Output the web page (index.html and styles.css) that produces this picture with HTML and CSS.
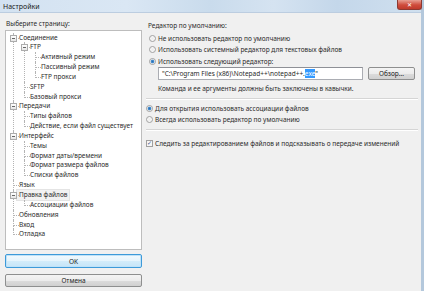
FILE: index.html
```html
<!DOCTYPE html>
<html>

<head>
  <meta charset='utf-8'>
  <title>Настройки</title>
  <meta name='viewport' content='width=device-width, initial-scale=1'>
  <link rel="stylesheet" href="styles.css">
</head>

<body>
  <div class="window">
    <div class="titlebar">
      <span class="title">Настройки</span>
      <span class="close">&#x2715;</span>
    </div>
    <div class="content">
      <div class="left">
        <div class="caption">Выберите страницу:</div>
        <div class="treebox">
          <ul class="tree">
            <li><span class="exp"></span><span class="row">Соединение</span>
              <ul>
                <li><span class="exp"></span><span class="row">FTP</span>
                  <ul>
                    <li><span class="row">Активный режим</span></li>
                    <li><span class="row">Пассивный режим</span></li>
                    <li><span class="row">FTP прокси</span></li>
                  </ul>
                </li>
                <li><span class="row">SFTP</span></li>
                <li><span class="row">Базовый прокси</span></li>
              </ul>
            </li>
            <li><span class="exp"></span><span class="row">Передачи</span>
              <ul>
                <li><span class="row">Типы файлов</span></li>
                <li><span class="row">Действие, если файл существует</span></li>
              </ul>
            </li>
            <li><span class="exp"></span><span class="row">Интерфейс</span>
              <ul>
                <li><span class="row">Темы</span></li>
                <li><span class="row">Формат даты/времени</span></li>
                <li><span class="row">Формат размера файлов</span></li>
                <li><span class="row">Списки файлов</span></li>
              </ul>
            </li>
            <li><span class="row">Язык</span></li>
            <li><span class="exp"></span><span class="row selected">Правка файлов</span>
              <ul>
                <li><span class="row">Ассоциации файлов</span></li>
              </ul>
            </li>
            <li><span class="row">Обновления</span></li>
            <li><span class="row">Вход</span></li>
            <li><span class="row">Отладка</span></li>
          </ul>
        </div>
        <button class="btn btn-ok">OK</button>
        <button class="btn btn-cancel">Отмена</button>
      </div>

      <div class="right">
        <div class="group-label">Редактор по умолчанию:</div>
        <label class="option first"><span class="radio"></span>Не использовать редактор по умолчанию</label>
        <label class="option first"><span class="radio"></span>Использовать системный редактор для текстовых файлов</label>
        <label class="option first"><span class="radio checked"></span>Использовать следующий редактор:</label>
        <div class="editor-row">
          <div class="textbox">"C:\Program Files (x86)\Notepad++\notepad++.<span class="sel">exe</span>"</div>
          <button class="btn btn-browse">Обзор...</button>
        </div>
        <div class="hint">Команда и ее аргументы должны быть заключены в кавычки.</div>
        <div class="separator"></div>
        <label class="option second"><span class="radio checked"></span>Для открытия использовать ассоциации файлов</label>
        <label class="option second"><span class="radio"></span>Всегда использовать редактор по умолчанию</label>
        <div class="separator"></div>
        <label class="option check-row"><span class="checkbox">&#x2713;</span>Следить за редактированием файлов и подсказывать о передаче изменений</label>
      </div>
    </div>
  </div>
</body>

</html>
```

FILE: styles.css
```css
* {
  box-sizing: border-box;
  margin: 0;
  padding: 0;
  font-family: "Noto Sans", "DejaVu Sans", sans-serif;
}

body {
  width: 424px;
  height: 291px;
  overflow: hidden;
  background: #f0f0f0;
  color: #2b2b2b;
  font-size: 6.5px;
}

.window {
  height: 291px;
  border-right: 3px solid #b4c8dc;
  background: #f0f0f0;
}

.titlebar {
  height: 13px;
  display: flex;
  justify-content: space-between;
  align-items: flex-start;
  background: linear-gradient(90deg, #d3e2f1 0%, #dae7f4 30%, #c9dbec 50%, #d5e3f1 65%, #c4d7ea 80%, #d0e0ef 100%);
  border-bottom: 1px solid #bccde0;
}

.title {
  padding: 2px 0 0 3px;
  line-height: 9px;
  font-size: 7px;
  color: #1b1b1b;
}

.close {
  width: 25px;
  height: 10px;
  margin-right: -1px;
  line-height: 10px;
  text-align: center;
  font-size: 6px;
  font-weight: bold;
  color: #fff;
  border: 1px solid #8c3a32;
  border-top: none;
  border-radius: 0 0 3px 3px;
  background: linear-gradient(#e8a093, #cf4c3c 55%, #c03b2c);
}

.content {
  display: flex;
}

.left {
  width: 142px;
  padding-left: 5px;
  display: flex;
  flex-direction: column;
}

.caption {
  margin-top: 6px;
  height: 10px;
  line-height: 10px;
  padding-left: 1px;
}

.treebox {
  margin-top: 1px;
  height: 220px;
  background: #fff;
  border: 1px solid #bdbdbd;
  overflow: hidden;
}

.tree,
.tree ul {
  list-style: none;
}

.tree {
  padding: 1.5px 0 0 7px;
}

.tree ul {
  margin-left: 5px;
}

.tree li {
  position: relative;
  padding-left: 6px;
}

.tree li::before {
  content: "";
  position: absolute;
  left: 0;
  top: 0;
  width: 5px;
  height: 5px;
  border-left: 1px dotted #b4b4b4;
  border-bottom: 1px dotted #b4b4b4;
}

.tree li::after {
  content: "";
  position: absolute;
  left: 0;
  top: 5px;
  bottom: 0;
  border-left: 1px dotted #b4b4b4;
}

.tree li:last-child::after {
  display: none;
}

.row {
  display: block;
  height: 9.85px;
  line-height: 9.85px;
  white-space: nowrap;
}

.row.selected {
  display: inline-block;
  padding: 0 2px;
  margin-left: -2px;
  background: #f2f2f2;
  outline: 1px solid #e4e4e4;
}

.exp {
  position: absolute;
  z-index: 1;
  left: -3px;
  top: 2px;
  width: 7px;
  height: 7px;
  border: 1px solid #acacac;
  background: linear-gradient(#ffffff, #e6e6e6);
}

.exp::after {
  content: "";
  position: absolute;
  left: 1px;
  top: 2px;
  width: 3px;
  height: 1px;
  background: #666;
}

.btn {
  display: block;
  font-size: 6.5px;
  color: #222;
  border: 1px solid #8e8f8f;
  border-radius: 2px;
  background: linear-gradient(#f4f4f4, #ececec 50%, #dcdcdc 51%, #d0d0d0);
}

.btn-ok {
  margin-top: 4px;
  height: 14px;
  border-color: #3d9ad9;
  box-shadow: inset 0 0 0 1px #bfe2f8;
  background: linear-gradient(#f3fafe, #e5f4fc 50%, #d3ecfa 51%, #c5e5f8);
}

.btn-cancel {
  margin-top: 6px;
  height: 13px;
}

.right {
  flex: 1;
  padding: 8px 3px 0 4px;
}

.group-label {
  height: 10px;
  line-height: 10px;
  padding-left: 2px;
}

.option {
  display: flex;
  align-items: center;
  gap: 2px;
  height: 11.5px;
  white-space: nowrap;
}

.option.first {
  padding-left: 3px;
}

.option.first:first-of-type {
  margin-top: 1.25px;
}

.option.second {
  height: 11px;
}

.separator + .option.second {
  margin-top: 3.5px;
}

.radio {
  width: 7px;
  height: 7px;
  flex-shrink: 0;
  border-radius: 50%;
  border: 1px solid #a0a0a0;
  background: radial-gradient(circle, #ececec, #fdfdfd);
}

.radio.checked {
  background: radial-gradient(circle, #2a6cb0 0, #4c95d6 1.6px, #f4f4f4 2.2px);
}

.checkbox {
  width: 7px;
  height: 7px;
  flex-shrink: 0;
  border: 1px solid #a0a0a0;
  background: #f6f6f6;
  font-size: 6px;
  line-height: 5px;
  text-align: center;
  color: #3c4f8a;
  font-weight: bold;
}

.check-row {
  margin-top: 6.5px;
  height: 11px;
}

.editor-row {
  display: flex;
  align-items: center;
  gap: 5px;
  padding-left: 12px;
  height: 13px;
}

.textbox {
  width: 205px;
  height: 13px;
  line-height: 11px;
  padding-left: 3px;
  white-space: nowrap;
  overflow: hidden;
  background: #fff;
  border: 1px solid #abadb3;
  border-top-color: #8e9096;
}

.sel {
  background: #3399ff;
  color: #fff;
}

.btn-browse {
  width: 47px;
  height: 13px;
}

.hint {
  margin-top: 4px;
  padding-left: 12px;
  height: 10px;
  line-height: 10px;
}

.separator {
  margin-top: 4px;
  height: 2px;
  border-top: 1px solid #d5d5d5;
  border-bottom: 1px solid #fff;
}

.separator + .check-row {
  margin-top: 6.5px;
}
```
